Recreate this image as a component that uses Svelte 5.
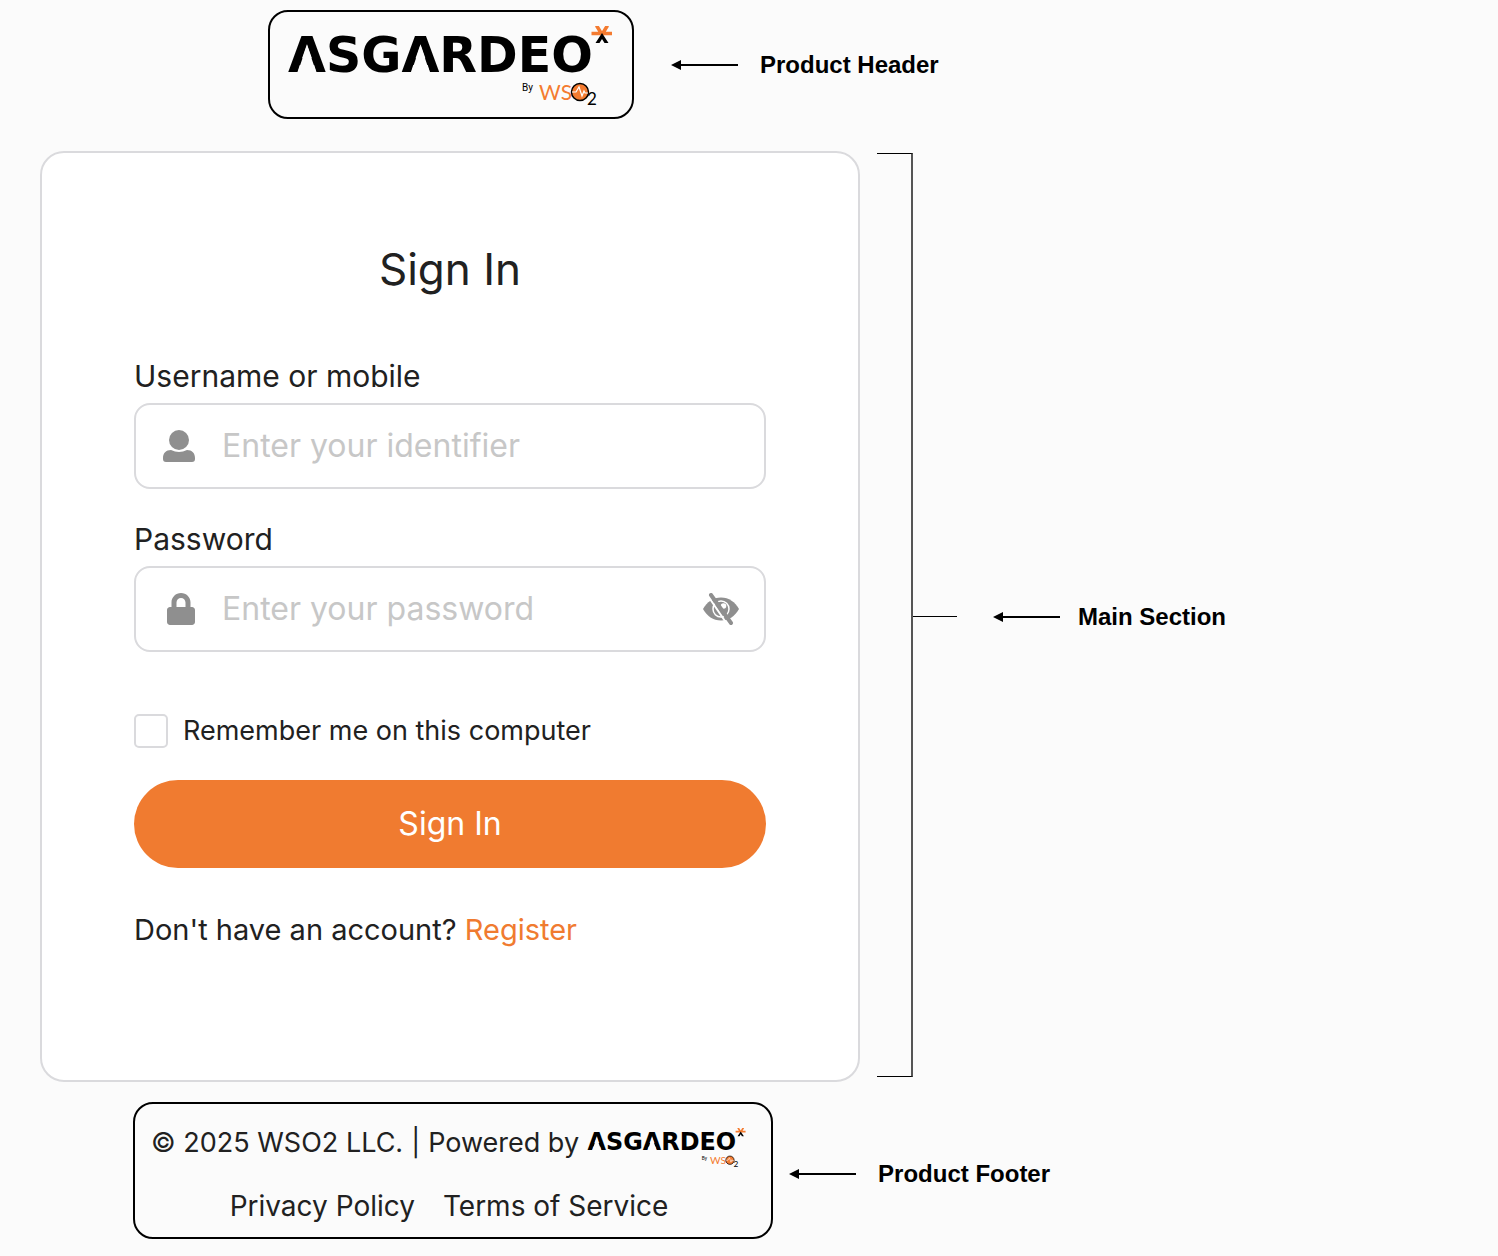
<script>
  let username = $state('');
  let password = $state('');
  let remember = $state(false);
  let visible = $state(false);
</script>

{#snippet logo()}
  <svg class="logo" viewBox="0 0 326 84" role="img" aria-label="Asgardeo by WSO2">
    <text class="wordmark" x="0" y="46">ASGARDEO</text>
    <!-- open counters of the two A letters -->
    <path d="M19 19 L28.500 47 H9.500 Z M132.500 19 L142 47 H123 Z" fill="#fbfbfb" />
    <g stroke="#f47b30" stroke-width="3.500">
      <path d="M303.500 7.500 H324 M314 8.500 L308.500 -0.500 M314 8.500 L319.500 -0.500" />
    </g>
    <path d="M314 7 L320.500 17 H316.500 L314 13 L311.500 17 H307.500 Z" fill="#000" />
    <text class="by" x="234" y="65">By</text>
    <text class="wso" x="251" y="74">WS</text>
    <circle cx="292" cy="66" r="8.500" fill="#f47b30" stroke="#000" stroke-width="1.500" />
    <path d="M284 66 H288 L291 61 L294 70 L296 65 L297 67 H300" fill="none" stroke="#fff" stroke-width="1.200" />
    <text class="two" x="299" y="79">2</text>
  </svg>
{/snippet}

{#snippet note(text)}
  <div class="note">
    <svg width="67" height="12" viewBox="0 0 67 12" aria-hidden="true">
      <path d="M8 6 H67" stroke="#000" stroke-width="2" />
      <path d="M0 6 L10 1 V11 Z" />
    </svg>
    <strong>{text}</strong>
  </div>
{/snippet}

<div class="page">
  <header class="row top">
    <div class="frame brand">{@render logo()}</div>
    {@render note('Product Header')}
  </header>

  <main class="row middle">
    <form class="card" onsubmit={(e) => e.preventDefault()}>
      <h1>Sign In</h1>

      <label for="username">Username or mobile</label>
      <div class="field">
        <span class="icon">
          <svg width="32" height="32" viewBox="0 0 32 32" aria-hidden="true">
            <circle cx="16" cy="10" r="10" />
            <path d="M8 20 Q16 24 24 20 C29 20 32 23 32 28 V29 Q32 32 29 32 H3 Q0 32 0 29 V28 C0 23 3 20 8 20 Z" />
          </svg>
        </span>
        <input id="username" type="text" placeholder="Enter your identifier" bind:value={username} />
      </div>

      <label for="password">Password</label>
      <div class="field">
        <span class="icon">
          <svg width="36" height="32" viewBox="-64 0 512 512" aria-hidden="true">
            <path d="M400 224h-24v-72C376 68.200 307.800 0 224 0S72 68.200 72 152v72H48c-26.500 0-48 21.500-48 48v192c0 26.500 21.500 48 48 48h352c26.500 0 48-21.500 48-48V272c0-26.500-21.500-48-48-48zm-104 0H152v-72c0-39.700 32.300-72 72-72s72 32.300 72 72v72z" />
          </svg>
        </span>
        <input id="password" type={visible ? 'text' : 'password'} placeholder="Enter your password" bind:value={password} />
        <button class="eye" type="button" aria-label="Show password" onclick={() => (visible = !visible)}>
          <svg width="36" height="32" viewBox="0 0 36 32" aria-hidden="true">
            <path d="M0 16 C4 9 10 4.500 18 4.500 S32 9 36 16 C32 23 26 27.500 18 27.500 S4 23 0 16 Z" />
            <circle cx="18" cy="16" r="8" fill="none" stroke="#fff" stroke-width="1.500" />
            <circle cx="20.500" cy="13" r="2.800" fill="#fff" />
            <path d="M5 3 L24 31" stroke="#fff" stroke-width="2" />
            <path d="M8 2 L28 30" stroke="#8f8f8f" stroke-width="4" stroke-linecap="round" />
          </svg>
        </button>
      </div>

      <div class="remember">
        <input id="remember" type="checkbox" bind:checked={remember} />
        <label for="remember">Remember me on this computer</label>
      </div>

      <button class="submit" type="submit">Sign In</button>

      <p class="register">Don't have an account? <a href="#register">Register</a></p>
    </form>

    <div class="bracket"></div>
    <div class="tick"></div>
    {@render note('Main Section')}
  </main>

  <footer class="row bottom">
    <div class="frame legal">
      <div class="powered"><span>© 2025 WSO2 LLC.</span><span>|</span><span>Powered by</span>{@render logo()}</div>
      <nav><a href="#privacy">Privacy Policy</a><a href="#terms">Terms of Service</a></nav>
    </div>
    {@render note('Product Footer')}
  </footer>
</div>

<style>
  :global(body) { margin: 0; background: #fbfbfb; }
  .page {
    box-sizing: border-box;
    padding: 10px 40px 17px;
    font-family: Inter, 'Open Sans', sans-serif;
    font-size: 28px;
    line-height: 36px;
    color: #212121;
  }
  .row { display: flex; align-items: center; }
  .top { padding-left: 228px; gap: 37px; margin-bottom: 32px; }
  .bottom { padding-left: 93px; gap: 16px; margin-top: 20px; }
  .frame { box-sizing: border-box; border: 2px solid #000; border-radius: 20px; }
  .brand { padding: 14px 18px 7px; }
  .logo { display: block; flex: none; width: 326px; height: 84px; }
  .wordmark { font: 700 49px 'DejaVu Sans', sans-serif; fill: #000; }
  .by { font: 10px Roboto, sans-serif; fill: #000; }
  .wso { font: 400 21px Lato, sans-serif; fill: #f47b30; }
  .two { font: 400 17px Lato, sans-serif; fill: #000; }

  .note { display: flex; align-items: center; gap: 22px; }
  .note svg { flex: none; }
  .note strong {
    font: 700 24px/30px 'Liberation Sans', Arial, sans-serif;
    color: #000;
    white-space: nowrap;
  }
  .middle .note { margin-left: 36px; gap: 18px; }
  .bottom .note { padding-top: 6px; }

  .card {
    box-sizing: border-box;
    flex: 0 1 820px;
    min-width: 0;
    display: flex;
    flex-direction: column;
    padding: 88px 92px 132px;
    border: 2px solid #dadadd;
    border-radius: 24px;
    background: #fff;
  }
  h1 { margin: 0 0 61px; font-size: 44px; line-height: 56px; font-weight: 400; text-align: center; }
  label { font-size: 30px; }
  .field {
    display: flex;
    align-items: center;
    box-sizing: border-box;
    height: 86px;
    margin: 9px 0 32px;
    padding-right: 25px;
    border: 2px solid #dadadd;
    border-radius: 16px;
  }
  .icon { display: flex; flex: none; width: 86px; justify-content: center; }
  .field svg { display: block; fill: #8f8f8f; }
  .field input {
    flex: 1;
    min-width: 0;
    padding: 0;
    border: 0;
    outline: 0;
    background: none;
    font: inherit;
    font-size: 32px;
    color: inherit;
  }
  .field input::placeholder { color: #c7c7c7; opacity: 1; }
  .eye { padding: 0; border: 0; background: none; }
  .remember { display: flex; align-items: center; gap: 15px; height: 34px; margin: 30px 0 32px; }
  .remember label { font-size: 27px; }
  .remember input {
    appearance: none;
    box-sizing: border-box;
    width: 34px;
    height: 34px;
    margin: 0;
    border: 2px solid #dadadd;
    border-radius: 5px;
  }
  .remember input:checked { background: #f07b30; }
  .submit {
    height: 88px;
    border: 0;
    border-radius: 44px;
    background: #f07b30;
    color: #fff;
    font: inherit;
    font-size: 32px;
  }
  .register { margin: 44px 0 0; font-size: 29px; }
  .register a { color: #f07b30; text-decoration: none; }

  .bracket {
    box-sizing: border-box;
    align-self: stretch;
    width: 36px;
    margin: 2px 0 5px 17px;
    border: 1px solid #000;
    border-right: 2px solid #555;
    border-left: 0;
  }
  .tick { width: 44px; height: 1px; background: #000; }

  .legal { padding: 21px 24px 13px 16px; }
  .powered { display: flex; align-items: flex-start; gap: 8px; font-size: 27px; white-space: nowrap; }
  .powered .logo { width: 160px; height: 41px; margin-top: 3px; }
  nav { display: flex; justify-content: center; gap: 28px; margin-top: 19px; }
  nav a { color: inherit; text-decoration: none; white-space: nowrap; }
</style>
